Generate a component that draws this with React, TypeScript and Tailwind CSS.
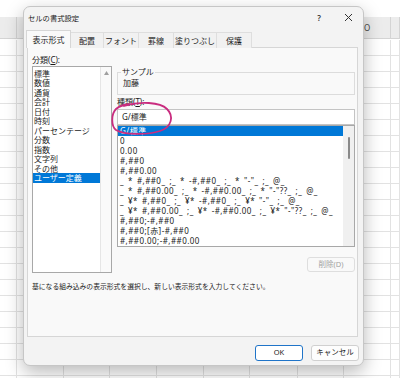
import React from 'react';

const font = "font-['Noto_Sans','Noto_Sans_CJK_JP',sans-serif]";

const tabs = [
  { label: '表示形式', w: 'w-[45px]', active: true },
  { label: '配置', w: 'w-[33px]' },
  { label: 'フォント', w: 'w-[35px]' },
  { label: '罫線', w: 'w-[35px]' },
  { label: '塗りつぶし', w: 'w-[43px]' },
  { label: '保護', w: 'w-[35px]' },
];

const categories = [
  '標準',
  '数値',
  '通貨',
  '会計',
  '日付',
  '時刻',
  'パーセンテージ',
  '分数',
  '指数',
  '文字列',
  'その他',
  'ユーザー定義',
];

const formats = [
  'G/標準',
  '0',
  '0.00',
  '#,##0',
  '#,##0.00',
  '_ * #,##0_ ;_ * -#,##0_ ;_ * "-"_ ;_ @_',
  '_ * #,##0.00_ ;_ * -#,##0.00_ ;_ * "-"??_ ;_ @_',
  '_ ¥* #,##0_ ;_ ¥* -#,##0_ ;_ ¥* "-"_ ;_ @_',
  '_ ¥* #,##0.00_ ;_ ¥* -#,##0.00_ ;_ ¥* "-"??_ ;_ @_',
  '#,##0;-#,##0',
  '#,##0;[赤]-#,##0',
  '#,##0.00;-#,##0.00',
];

function Sheet() {
  const cells = Array.from({ length: 22 * 10 });
  return (
    <div className="flex flex-col">
      <div className="h-[17px] bg-white" />
      {/* column header */}
      <div className="grid h-[22px] grid-cols-[17px_47px_46px_47px_47px_46px_48px_46px_47px_9px] border-b border-[#d4d4d4] bg-[#ececec]">
        {Array.from({ length: 10 }).map((_, i) => (
          <div key={i} className="flex items-center justify-center border-r border-[#d4d4d4] text-[8px] text-[#444]">
            {i === 8 ? 'O' : ''}
          </div>
        ))}
      </div>
      {/* cells */}
      <div className="grid grid-cols-[17px_47px_46px_47px_47px_46px_48px_46px_47px_9px] pt-[1px]">
        {cells.map((_, i) => (
          <div key={i} className="h-[16px] border-r border-b border-[#e2e2e2]" />
        ))}
      </div>
    </div>
  );
}

function Dialog() {
  return (
    <div
      className={`absolute left-[23px] top-[6px] flex h-[360px] w-[341px] flex-col rounded-[7px] border border-[#c6c6c6] bg-[#f3f3f3] text-[#1b1b1b] shadow-[0_6px_18px_rgba(0,0,0,0.28)] ${font}`}
    >
      {/* Title bar */}
      <div className="flex h-[21px] items-center pl-[4px] pr-[3px]">
        <span className="text-[7.3px] leading-[10px]">セルの書式設定</span>
        <div className="ml-auto flex gap-[5px]">
          <span className="flex w-[24px] items-center justify-center text-[8px] font-semibold leading-[10px] text-[#333]">?</span>
          <span className="flex w-[24px] items-center justify-center">
            <svg width="9" height="9" viewBox="0 0 9 9" fill="none" stroke="#333" strokeWidth="1">
              <path d="M1 1 L8 8 M8 1 L1 8" />
            </svg>
          </span>
        </div>
      </div>

      {/* Tabs */}
      <div className="relative z-10 -mb-px flex h-[20px] items-end pl-[2px]">
        {tabs.map((t) =>
          t.active ? (
            <div
              key={t.label}
              className={`${t.w} flex h-[18px] items-center justify-center border border-b-0 border-[#d6d6d6] bg-[#f9f9f9] text-[8px]`}
            >
              {t.label}
            </div>
          ) : (
            <div
              key={t.label}
              className={`${t.w} flex h-[16px] items-center justify-center border-t border-r border-[#dedede] bg-[#f1f1f1] text-[8px]`}
            >
              {t.label}
            </div>
          ),
        )}
      </div>

      {/* Panel */}
      <div className="ml-[3px] flex h-[290px] w-[331px] flex-col border border-[#d6d6d6] bg-[#f9f9f9] pl-[4px] pt-[7px]">
        <div className="flex items-start gap-[5px]">
          {/* category */}
          <div className="flex w-[80px] flex-col">
            <div className="text-[8px] leading-[10px]">
              分類(<span className="underline">C</span>):
            </div>
            <div className="mt-[1px] flex h-[207px] border border-[#a8a8a8] bg-white">
              <div className="flex flex-1 flex-col pt-[1.5px]">
                {categories.map((c) => (
                  <div
                    key={c}
                    className={`h-[9.5px] pl-[1px] text-[8px] leading-[9.5px] whitespace-nowrap ${
                      c === 'ユーザー定義' ? 'bg-[#0078d7] text-white' : ''
                    }`}
                  >
                    {c}
                  </div>
                ))}
              </div>
              <div className="flex w-[11px] flex-col items-center border-l border-[#e6e6e6] bg-[#fafafa] pt-[4px]">
                <svg width="5" height="4" viewBox="0 0 5 4">
                  <path d="M2.5 0 L5 4 L0 4Z" fill="#a0a0a0" />
                </svg>
              </div>
            </div>
          </div>

          {/* right side */}
          <div className="mt-[12px] flex w-[238px] flex-col">
            <fieldset className="h-[28px] border border-[#dcdcdc]">
              <legend className="ml-[3px] px-[1px] text-[8px] leading-[10px]">サンプル</legend>
              <div className="pl-[5px] pt-[1px] text-[8px] leading-[10px]">加藤</div>
            </fieldset>
            <div className="mt-[2px] text-[8px] leading-[10px]">
              種類(<span className="underline">T</span>):
            </div>
            <div className="mt-[2px] flex h-[16px] items-center border border-[#c4c4c4] bg-white pl-[4px] text-[8px]">
              G/標準
            </div>
            <div className="flex h-[122px] border border-[#a8a8a8] bg-white">
              <div className="flex flex-1 flex-col overflow-hidden">
                {formats.map((f, i) => (
                  <div
                    key={f}
                    className={`h-[10px] shrink-0 pl-[2px] text-[8px] leading-[10px] tracking-[0.45px] [word-spacing:1.5px] whitespace-pre ${
                      i === 0 ? 'bg-[#0078d7] text-white' : ''
                    }`}
                  >
                    {f}
                  </div>
                ))}
              </div>
              <div className="flex w-[11px] justify-center bg-[#f0f0f0] pt-[11px]">
                <div className="h-[22px] w-[2px] rounded-full bg-[#8a8a8a]" />
              </div>
            </div>
            <button className="ml-auto mt-[10px] flex h-[15px] w-[48px] items-center justify-center rounded-[3px] border border-[#dedede] bg-[#f9f9f9] text-[7.5px] text-[#a2a2a2]">
              削除(D)
            </button>
          </div>
        </div>

        <p className="mt-[9px] text-[6.8px] leading-[10px] whitespace-nowrap">
          基になる組み込みの表示形式を選択し、新しい表示形式を入力してください。
        </p>
      </div>

      {/* Buttons */}
      <div className="mt-[8px] flex justify-end gap-[8px] pr-[4px]">
        <button className="flex h-[16px] w-[48px] items-center justify-center rounded-[3px] border border-[#1f74c8] bg-white text-[7.5px]">
          OK
        </button>
        <button className="flex h-[16px] w-[48px] items-center justify-center rounded-[3px] border border-[#d0d0d0] bg-[#fdfdfd] text-[7.5px]">
          キャンセル
        </button>
      </div>
    </div>
  );
}

export default function App() {
  return (
    <div className={`relative h-[378px] w-[400px] overflow-hidden bg-white ${font}`}>
      <Sheet />
      <Dialog />
      {/* hand-drawn highlight */}
      <svg
        className="absolute left-[110px] top-[100px]"
        width="66"
        height="40"
        viewBox="0 0 66 40"
        fill="none"
        stroke="#c92c7f"
        strokeWidth="1.8"
        strokeLinecap="round"
      >
        <path d="M14 6 C30 1, 50 2, 57 9 C64 16, 62 27, 50 31 C38 35, 14 35, 6 30 C1 26, 1 14, 6 9 C9 6, 16 4, 24 4" />
      </svg>
    </div>
  );
}
